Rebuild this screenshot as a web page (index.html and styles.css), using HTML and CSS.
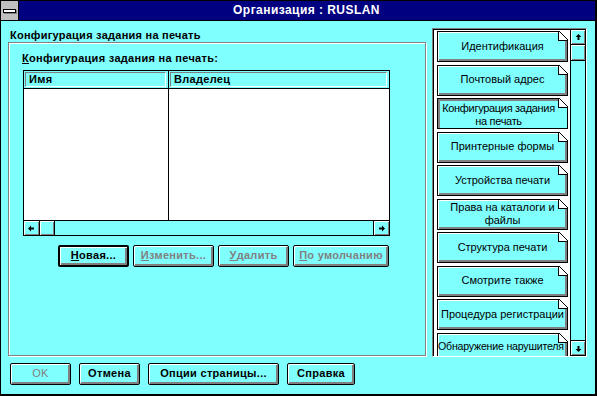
FILE: index.html
```html
<!DOCTYPE html>
<html lang="ru">
<head>
<meta charset="UTF-8">
<title>Организация : RUSLAN</title>
<link rel="stylesheet" href="styles.css">
</head>
<body>
<div class="window">
    <div class="titlebar">
        <div class="sysmenu"><span></span></div>
        <div class="title">Организация : RUSLAN</div>
    </div>

    <div class="client">
        <div class="page">
            <div class="page-title">Конфигурация задания на печать</div>
            <div class="group">
                <div class="group-label"><u>К</u>онфигурация задания на печать:</div>
                <div class="listview">
                    <div class="lv-head">
                        <div class="col-name"><div class="lv-cap">Имя</div></div>
                        <div class="col-owner"><div class="lv-cap">Владелец</div></div>
                    </div>
                    <div class="lv-body">
                        <div class="col-name"></div>
                        <div class="col-owner"></div>
                    </div>
                    <div class="hscroll">
                        <div class="sb-btn"><svg width="7" height="7" viewBox="0 0 7 7"><polygon points="0,3.5 3,0.5 3,2.5 6,2.5 6,4.5 3,4.5 3,6.5"/></svg></div>
                        <div class="sb-thumb"></div>
                        <div class="sb-track"></div>
                        <div class="sb-btn sb-end"><svg width="7" height="7" viewBox="0 0 7 7"><polygon points="7,3.5 4,0.5 4,2.5 1,2.5 1,4.5 4,4.5 4,6.5"/></svg></div>
                    </div>
                </div>
                <div class="actions">
                    <a class="btn btn-default w-new" href="#"><u>Н</u>овая...</a>
                    <a class="btn off w-edit" href="#"><u>И</u>зменить...</a>
                    <a class="btn off w-del" href="#"><u>У</u>далить</a>
                    <a class="btn off w-def" href="#"><u>П</u>о умолчанию</a>
                </div>
            </div>
        </div>

        <div class="tabpanel">
            <div class="tabs">
                <a class="tab" href="#">Идентификация</a>
                <a class="tab" href="#">Почтовый адрес</a>
                <a class="tab tab-on" href="#">Конфигурация задания<br>на печать</a>
                <a class="tab" href="#">Принтерные формы</a>
                <a class="tab" href="#">Устройства печати</a>
                <a class="tab" href="#">Права на каталоги и<br>файлы</a>
                <a class="tab" href="#">Структура печати</a>
                <a class="tab" href="#">Смотрите также</a>
                <a class="tab" href="#">Процедура регистрации</a>
                <a class="tab tab-long" href="#">Обнаружение нарушителя</a>
            </div>
            <div class="vscroll">
                <div class="sb-btn"><svg width="7" height="7" viewBox="0 0 7 7"><polygon points="3.5,0 6.5,3 4.5,3 4.5,6 2.5,6 2.5,3 0.5,3"/></svg></div>
                <div class="sb-thumb"></div>
                <div class="sb-track"></div>
                <div class="sb-btn sb-end"><svg width="7" height="7" viewBox="0 0 7 7"><polygon points="3.5,7 6.5,4 4.5,4 4.5,1 2.5,1 2.5,4 0.5,4"/></svg></div>
            </div>
        </div>
    </div>

    <div class="footer">
        <a class="btn off w-ok" href="#">OK</a>
        <a class="btn w-cancel" href="#">Отмена</a>
        <a class="btn w-opts" href="#">Опции страницы...</a>
        <a class="btn w-help" href="#">Справка</a>
    </div>
</div>
</body>
</html>
```

FILE: styles.css
```css
html,body{margin:0;padding:0;}
body{background:#80ffff;font:11px/13px "Liberation Sans",Arial,sans-serif;color:#000;}
a{color:#000;text-decoration:none;}
u{text-decoration:underline;text-underline-offset:1px;}

.window{box-sizing:border-box;width:597px;height:396px;border:1px solid #000;border-right-width:2px;border-bottom-width:2px;background:#80ffff;display:flex;flex-direction:column;}

/* title bar */
.titlebar{display:flex;height:19px;background:#000080;border-bottom:1px solid #000;flex:none;}
.sysmenu{width:17px;background:#c0c0c0;border-right:1px solid #000;display:flex;align-items:center;justify-content:center;}
.sysmenu span{width:11px;height:2px;border:1px solid #000;background:#fff;box-shadow:1px 1px 0 #808080;}
.title{flex:1;text-align:center;color:#fff;font-weight:bold;font-size:12px;letter-spacing:.45px;line-height:19px;padding-right:1px;}

/* client area */
.client{display:flex;height:329px;padding:7px 0 0 7px;flex:none;}
.page{width:418px;display:flex;flex-direction:column;}
.page-title{height:14px;line-height:14px;padding-left:2px;font-weight:bold;letter-spacing:.25px;}
.group{box-sizing:border-box;height:314px;border:1px solid #808080;box-shadow:inset 1px 1px #fff,1px 1px #fff;padding:8px 0 0 14px;}
.group-label{margin-left:-1px;line-height:14px;font-weight:bold;letter-spacing:.3px;}

/* list view */
.listview{box-sizing:border-box;width:367px;height:166px;margin-top:5px;border:1px solid #000;background:#fff;display:flex;flex-direction:column;}
.lv-head{display:flex;height:17px;border-bottom:1px solid #000;background:#80ffff;}
.lv-body{display:flex;flex:1;}
.col-name{box-sizing:border-box;width:145px;border-right:1px solid #000;}
.col-owner{flex:1;}
.lv-head .col-name,.lv-head .col-owner{display:flex;}
.lv-cap{flex:1;margin:1px 2px 1px 1px;border:1px solid;border-color:#808080 #fff #fff #808080;padding-left:3px;font-weight:bold;letter-spacing:.3px;line-height:13px;}

/* scroll bars */
.hscroll{display:flex;height:14px;border-top:1px solid #000;background:#80ffff;}
.sb-btn{box-sizing:border-box;width:16px;display:flex;align-items:center;justify-content:center;border-right:1px solid #000;box-shadow:inset 1px 1px #fff,inset -1px -1px #808080;background:#80ffff;}
.sb-thumb{box-sizing:border-box;width:15px;border-right:1px solid #000;box-shadow:inset 1px 1px #fff,inset -1px -1px #808080;}
.sb-track{flex:1;}
.hscroll .sb-end{border-right:0;border-left:1px solid #000;width:16px;}
.sb-btn svg{display:block;fill:#000;}

.vscroll{box-sizing:border-box;width:16px;border:1px solid #000;background:#80ffff;display:flex;flex-direction:column;flex:none;}
.vscroll .sb-btn{width:auto;height:15px;border-right:0;border-bottom:1px solid #000;}
.vscroll .sb-thumb{width:auto;height:16px;border-right:0;border-bottom:1px solid #000;}
.vscroll .sb-end{border-bottom:0;border-top:1px solid #000;}

/* buttons */
.actions{display:flex;gap:4px;margin:9px 0 0 35px;}
.footer{display:flex;gap:8px;padding:6px 0 0 9px;}
.btn{box-sizing:border-box;height:22px;display:flex;align-items:center;justify-content:center;border:1px solid #000;border-radius:2px;box-shadow:inset 1px 1px #fff,inset -2px -2px #808080;background:#80ffff;font-weight:bold;letter-spacing:.3px;padding-bottom:1px;white-space:nowrap;}
.btn-default{border-width:2px;}
.btn.off{color:#808080;}
.w-new{width:71px;}
.w-edit{width:81px;}
.w-del{width:71px;}
.w-def{width:96px;}
.w-ok{width:61px;font-weight:normal;}
.w-cancel{width:61px;}
.w-opts{width:131px;}
.w-help{width:68px;}

/* tab strip */
.tabpanel{box-sizing:border-box;width:155px;height:329px;margin-left:6px;border:1px solid;border-color:#808080 #fff #fff #808080;box-shadow:inset 1px 1px #000;background:#fff;display:flex;}
.tabs{flex:1;overflow:hidden;padding:2px 0 0 4px;display:flex;flex-direction:column;gap:2.56px;}
.tab{position:relative;box-sizing:border-box;flex:none;width:131px;height:31px;border:1px solid #000;box-shadow:inset 1px 1px #fff,inset -2px -2px #808080;background:#80ffff;display:flex;align-items:center;justify-content:center;text-align:center;line-height:13px;padding-bottom:1px;white-space:nowrap;}
.tab::before{content:"";position:absolute;top:-1px;right:-1px;width:10px;height:10px;box-sizing:border-box;border-left:1px solid #000;border-bottom:1px solid #000;background:linear-gradient(45deg,#fff calc(50% - 0.6px),#000 calc(50% - 0.6px),#000 calc(50% + 0.6px),#fff calc(50% + 0.6px));}
.tab-on{box-shadow:inset 2px 2px #808080;padding:2px 8px 0 0;letter-spacing:-.3px;}
.tab-long{justify-content:flex-start;padding:0 0 4px 0;font-size:10.6px;letter-spacing:-.2px;}
```
